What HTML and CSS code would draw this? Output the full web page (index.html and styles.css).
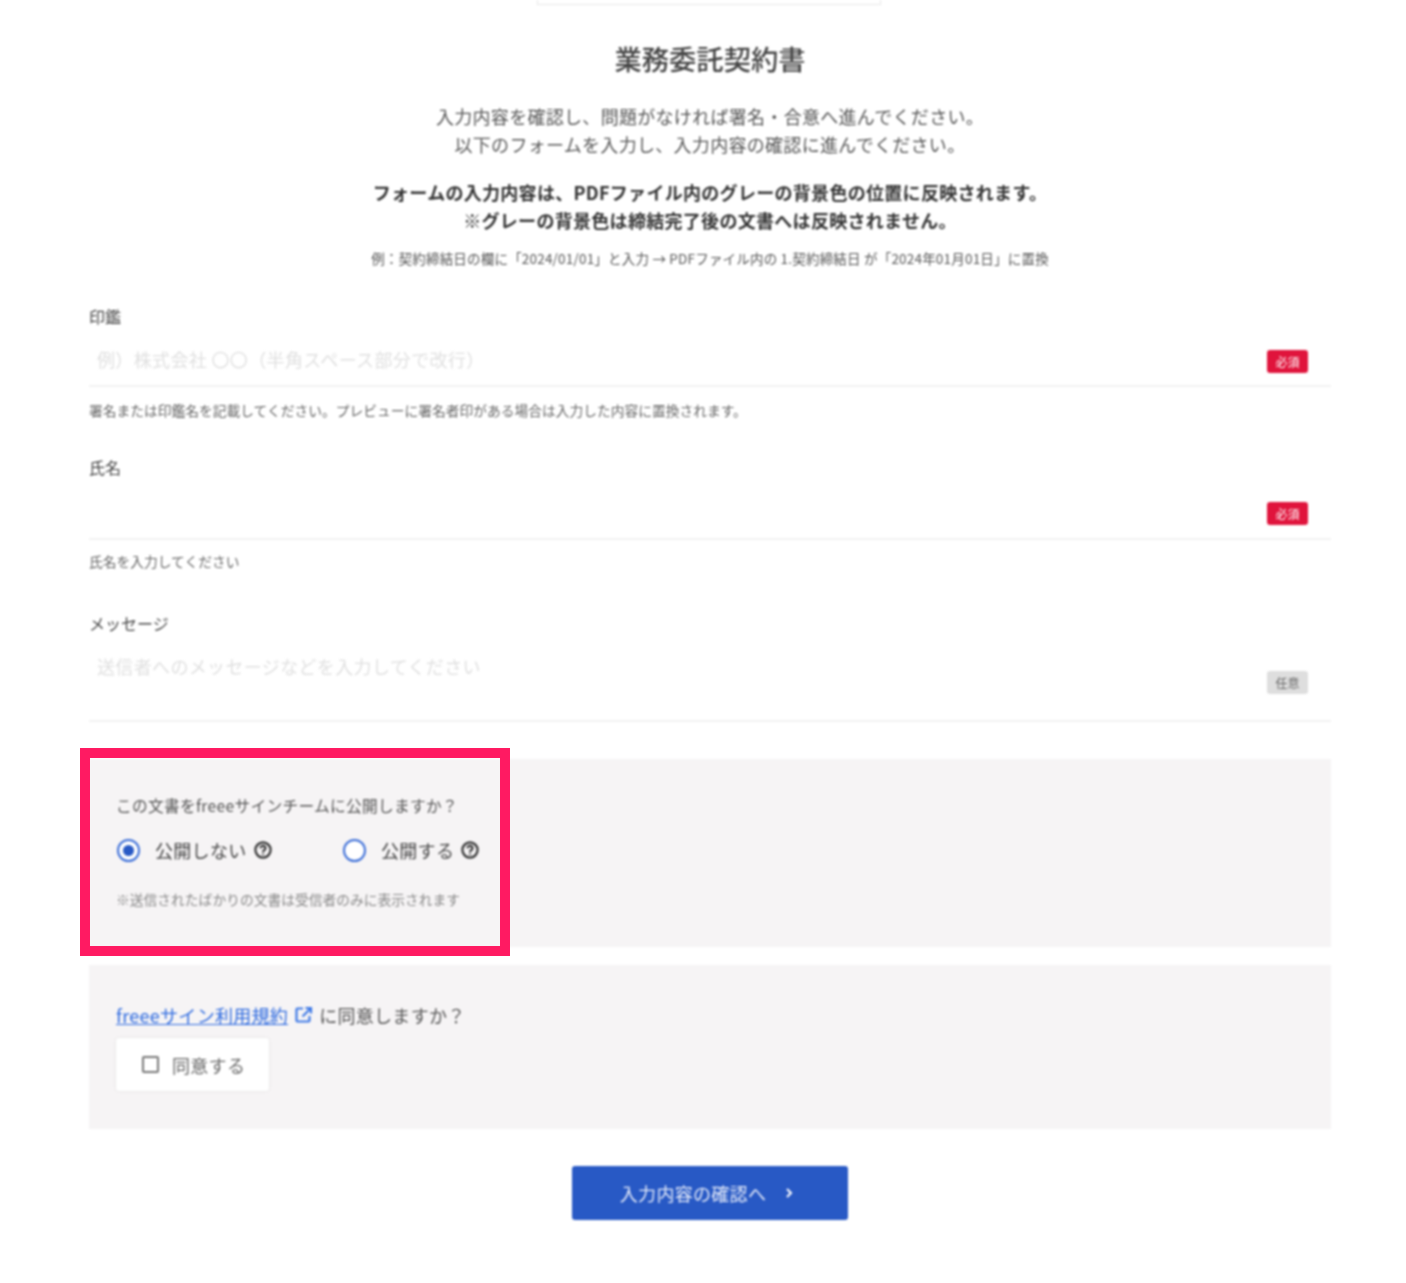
FILE: index.html
```html
<!DOCTYPE html>
<html lang="ja">
<head>
  <meta charset="UTF-8" />
  <title>業務委託契約書</title>
  <link rel="stylesheet" href="styles.css">
</head>
<body>
  <div class="page">
    <div class="top-stub"></div>
    <h1 class="title">業務委託契約書</h1>
    <div class="lead">
      <p>入力内容を確認し、問題がなければ署名・合意へ進んでください。<br>以下のフォームを入力し、入力内容の確認に進んでください。</p>
      <p class="lead-bold">フォームの入力内容は、PDFファイル内のグレーの背景色の位置に反映されます。<br>※グレーの背景色は締結完了後の文書へは反映されません。</p>
      <p class="lead-small">例：契約締結日の欄に「2024/01/01」と入力 → PDFファイル内の 1.契約締結日 が「2024年01月01日」に置換</p>
    </div>

    <div class="field field-seal">
      <div class="field-label">印鑑</div>
      <div class="field-input">
        <span class="placeholder">例）株式会社 〇〇（半角スペース部分で改行）</span>
        <span class="badge badge-required">必須</span>
      </div>
      <div class="field-hint">署名または印鑑名を記載してください。プレビューに署名者印がある場合は入力した内容に置換されます。</div>
    </div>

    <div class="field field-name">
      <div class="field-label">氏名</div>
      <div class="field-input">
        <span class="placeholder"></span>
        <span class="badge badge-required">必須</span>
      </div>
      <div class="field-hint">氏名を入力してください</div>
    </div>

    <div class="field field-message">
      <div class="field-label">メッセージ</div>
      <div class="field-input field-input-tall">
        <span class="placeholder">送信者へのメッセージなどを入力してください</span>
        <span class="badge badge-optional">任意</span>
      </div>
    </div>

    <div class="panel panel-publish">
      <div class="panel-question">この文書をfreeeサインチームに公開しますか？</div>
      <div class="radio-row">
        <label class="radio-item radio-item-first">
          <span class="radio radio-on"></span>
          <span>公開しない</span>
          <svg class="help" viewBox="0 0 18 18"><circle cx="9" cy="9" r="7.6"/><path d="M6.6 7.2a2.4 2.4 0 1 1 3.7 2c-.9.6-1.3 1-1.3 2"/><path d="M9 12.6v1.2"/></svg>
        </label>
        <label class="radio-item">
          <span class="radio"></span>
          <span>公開する</span>
          <svg class="help" viewBox="0 0 18 18"><circle cx="9" cy="9" r="7.6"/><path d="M6.6 7.2a2.4 2.4 0 1 1 3.7 2c-.9.6-1.3 1-1.3 2"/><path d="M9 12.6v1.2"/></svg>
        </label>
      </div>
      <div class="panel-note">※送信されたばかりの文書は受信者のみに表示されます</div>
    </div>

    <div class="panel panel-terms">
      <div class="terms-line">
        <a href="#" class="terms-link">freeeサイン利用規約</a>
        <svg class="ext-icon" viewBox="0 0 18 18"><path d="M8 2.5H2.5a1 1 0 0 0-1 1v11a1 1 0 0 0 1 1h11a1 1 0 0 0 1-1V10"/><path d="M7.5 10.5 15.5 2.5"/><path d="M10.5 2h5.5v5.5"/></svg>
        <span>に同意しますか？</span>
      </div>
      <label class="agree-btn"><span class="checkbox"></span>同意する</label>
    </div>

    <div class="actions">
      <button class="submit-btn">入力内容の確認へ<svg class="chevron" viewBox="0 0 10 12"><path d="M3 2l4 4-4 4"/></svg></button>
    </div>
  </div>
  <div class="highlight"></div>
</body>
</html>
```

FILE: styles.css
```css
body {
  margin: 0;
  background: #fff;
  color: #444;
  font-family: "Noto Sans CJK JP", "Noto Sans", sans-serif;
  position: relative;
  height: 1283px;
  overflow: hidden;
}
.page {
  width: 1242px;
  margin-left: 89px;
  filter: blur(0.8px);
}
.top-stub {
  width: 344px;
  height: 5px;
  margin-left: 448px;
  box-sizing: border-box;
  border: 1px solid #e8e8e8;
  border-top: 0;
}
.title {
  margin: 33px 0 0;
  font-size: 27.3px;
  line-height: 40px;
  font-weight: 500;
  text-align: center;
  color: #444;
}
.lead {
  margin-top: 24px;
  text-align: center;
  font-size: 18px;
  letter-spacing: 0.3px;
  line-height: 28px;
  color: #555;
}
.lead p {
  margin: 0;
}
.lead .lead-bold {
  margin-top: 20px;
  font-weight: 700;
  color: #333;
}
.lead .lead-small {
  margin-top: 14px;
  font-size: 13.5px;
  letter-spacing: 0.2px;
  line-height: 20px;
  color: #555;
}
.field-label {
  font-size: 16px;
  line-height: 20px;
  color: #444;
}
.field-input {
  display: flex;
  align-items: center;
  justify-content: space-between;
  height: 60px;
  padding: 6px 23px 0 8px;
  border-bottom: 2px solid #f2f2f2;
  box-sizing: border-box;
}
.placeholder {
  font-size: 18px;
  letter-spacing: 0.35px;
  color: #e0e0e0;
}
.badge {
  width: 41px;
  height: 23px;
  border-radius: 3px;
  font-size: 12px;
  line-height: 23px;
  text-align: center;
}
.badge-required {
  background: #e0143c;
  color: #fff;
}
.badge-optional {
  background: #dedede;
  color: #666;
}
.field-hint {
  margin-top: 13px;
  font-size: 13.75px;
  line-height: 20px;
  color: #666;
}
.field-seal {
  margin-top: 38px;
}
.field-seal .field-input {
  height: 61px;
}
.field-seal .badge {
  margin-top: 6px;
}
.field-name {
  margin-top: 37px;
}
.field-name .field-input {
  height: 63px;
}
.field-name .badge {
  margin-top: 5px;
}
.field-name .field-hint {
  margin-top: 11px;
}
.field-message {
  margin-top: 42px;
}
.field-input-tall {
  height: 89px;
  align-items: flex-start;
  padding-top: 20px;
}
.field-input-tall .badge {
  margin-top: 18px;
}
.panel {
  background: #f6f4f5;
  padding-left: 27px;
  box-sizing: border-box;
}
.panel-publish {
  margin-top: 37px;
  height: 188px;
  padding-top: 36px;
}
.panel-question {
  font-size: 15.7px;
  letter-spacing: 0.3px;
  line-height: 22px;
  color: #555;
}
.radio-row {
  display: flex;
  margin-top: 11px;
}
.radio-item {
  display: flex;
  align-items: center;
  font-size: 18px;
  letter-spacing: 0.3px;
  line-height: 44px;
  color: #444;
  height: 44px;
}
.radio-item-first {
  width: 226px;
}
.radio {
  width: 23px;
  height: 23px;
  box-sizing: border-box;
  border: 2px solid #3d6fd8;
  border-radius: 50%;
  background: #fff;
  margin: 0 15px 0 1px;
  flex: none;
  position: relative;
}
.radio-on::after {
  content: "";
  position: absolute;
  left: 4px;
  top: 4px;
  width: 11px;
  height: 11px;
  border-radius: 50%;
  background: #2859c5;
}
.help {
  width: 18px;
  height: 18px;
  margin-left: 7px;
  fill: none;
  stroke: #333;
  stroke-width: 2.2;
}
.panel-note {
  margin-top: 17px;
  font-size: 13.75px;
  line-height: 20px;
  color: #888;
}
.panel-terms {
  margin-top: 18px;
  height: 164px;
  padding-top: 35px;
}
.terms-line {
  display: flex;
  align-items: center;
  font-size: 18px;
  letter-spacing: 0.3px;
  line-height: 30px;
  color: #555;
}
.terms-link {
  color: #2f6be0;
}
.ext-icon {
  width: 18px;
  height: 18px;
  margin: 0 6px 0 7px;
  fill: none;
  stroke: #3d78e6;
  stroke-width: 2.2;
}
.agree-btn {
  display: flex;
  align-items: center;
  width: 153px;
  height: 53px;
  margin-top: 8px;
  padding-left: 26px;
  box-sizing: border-box;
  background: #fff;
  border-radius: 3px;
  box-shadow: 0 0 3px rgba(0, 0, 0, 0.1);
  font-size: 18px;
  letter-spacing: 0.3px;
  color: #666;
}
.checkbox {
  width: 17px;
  height: 17px;
  box-sizing: border-box;
  border: 2px solid #777;
  border-radius: 2px;
  margin-right: 13px;
}
.actions {
  display: flex;
  justify-content: center;
  margin-top: 37px;
}
.submit-btn {
  display: flex;
  align-items: center;
  justify-content: center;
  width: 276px;
  height: 54px;
  border: 0;
  border-radius: 3px;
  background: #2859c5;
  color: #e6ecfa;
  font-family: inherit;
  font-size: 18px;
  letter-spacing: 0.3px;
  padding: 0 6px 0 0;
}
.chevron {
  width: 10px;
  height: 12px;
  margin-left: 18px;
  fill: none;
  stroke: #fff;
  stroke-width: 2;
}
.highlight {
  position: absolute;
  left: 80px;
  top: 748px;
  width: 430px;
  height: 208px;
  box-sizing: border-box;
  border: 10px solid #ff1a62;
}
```
